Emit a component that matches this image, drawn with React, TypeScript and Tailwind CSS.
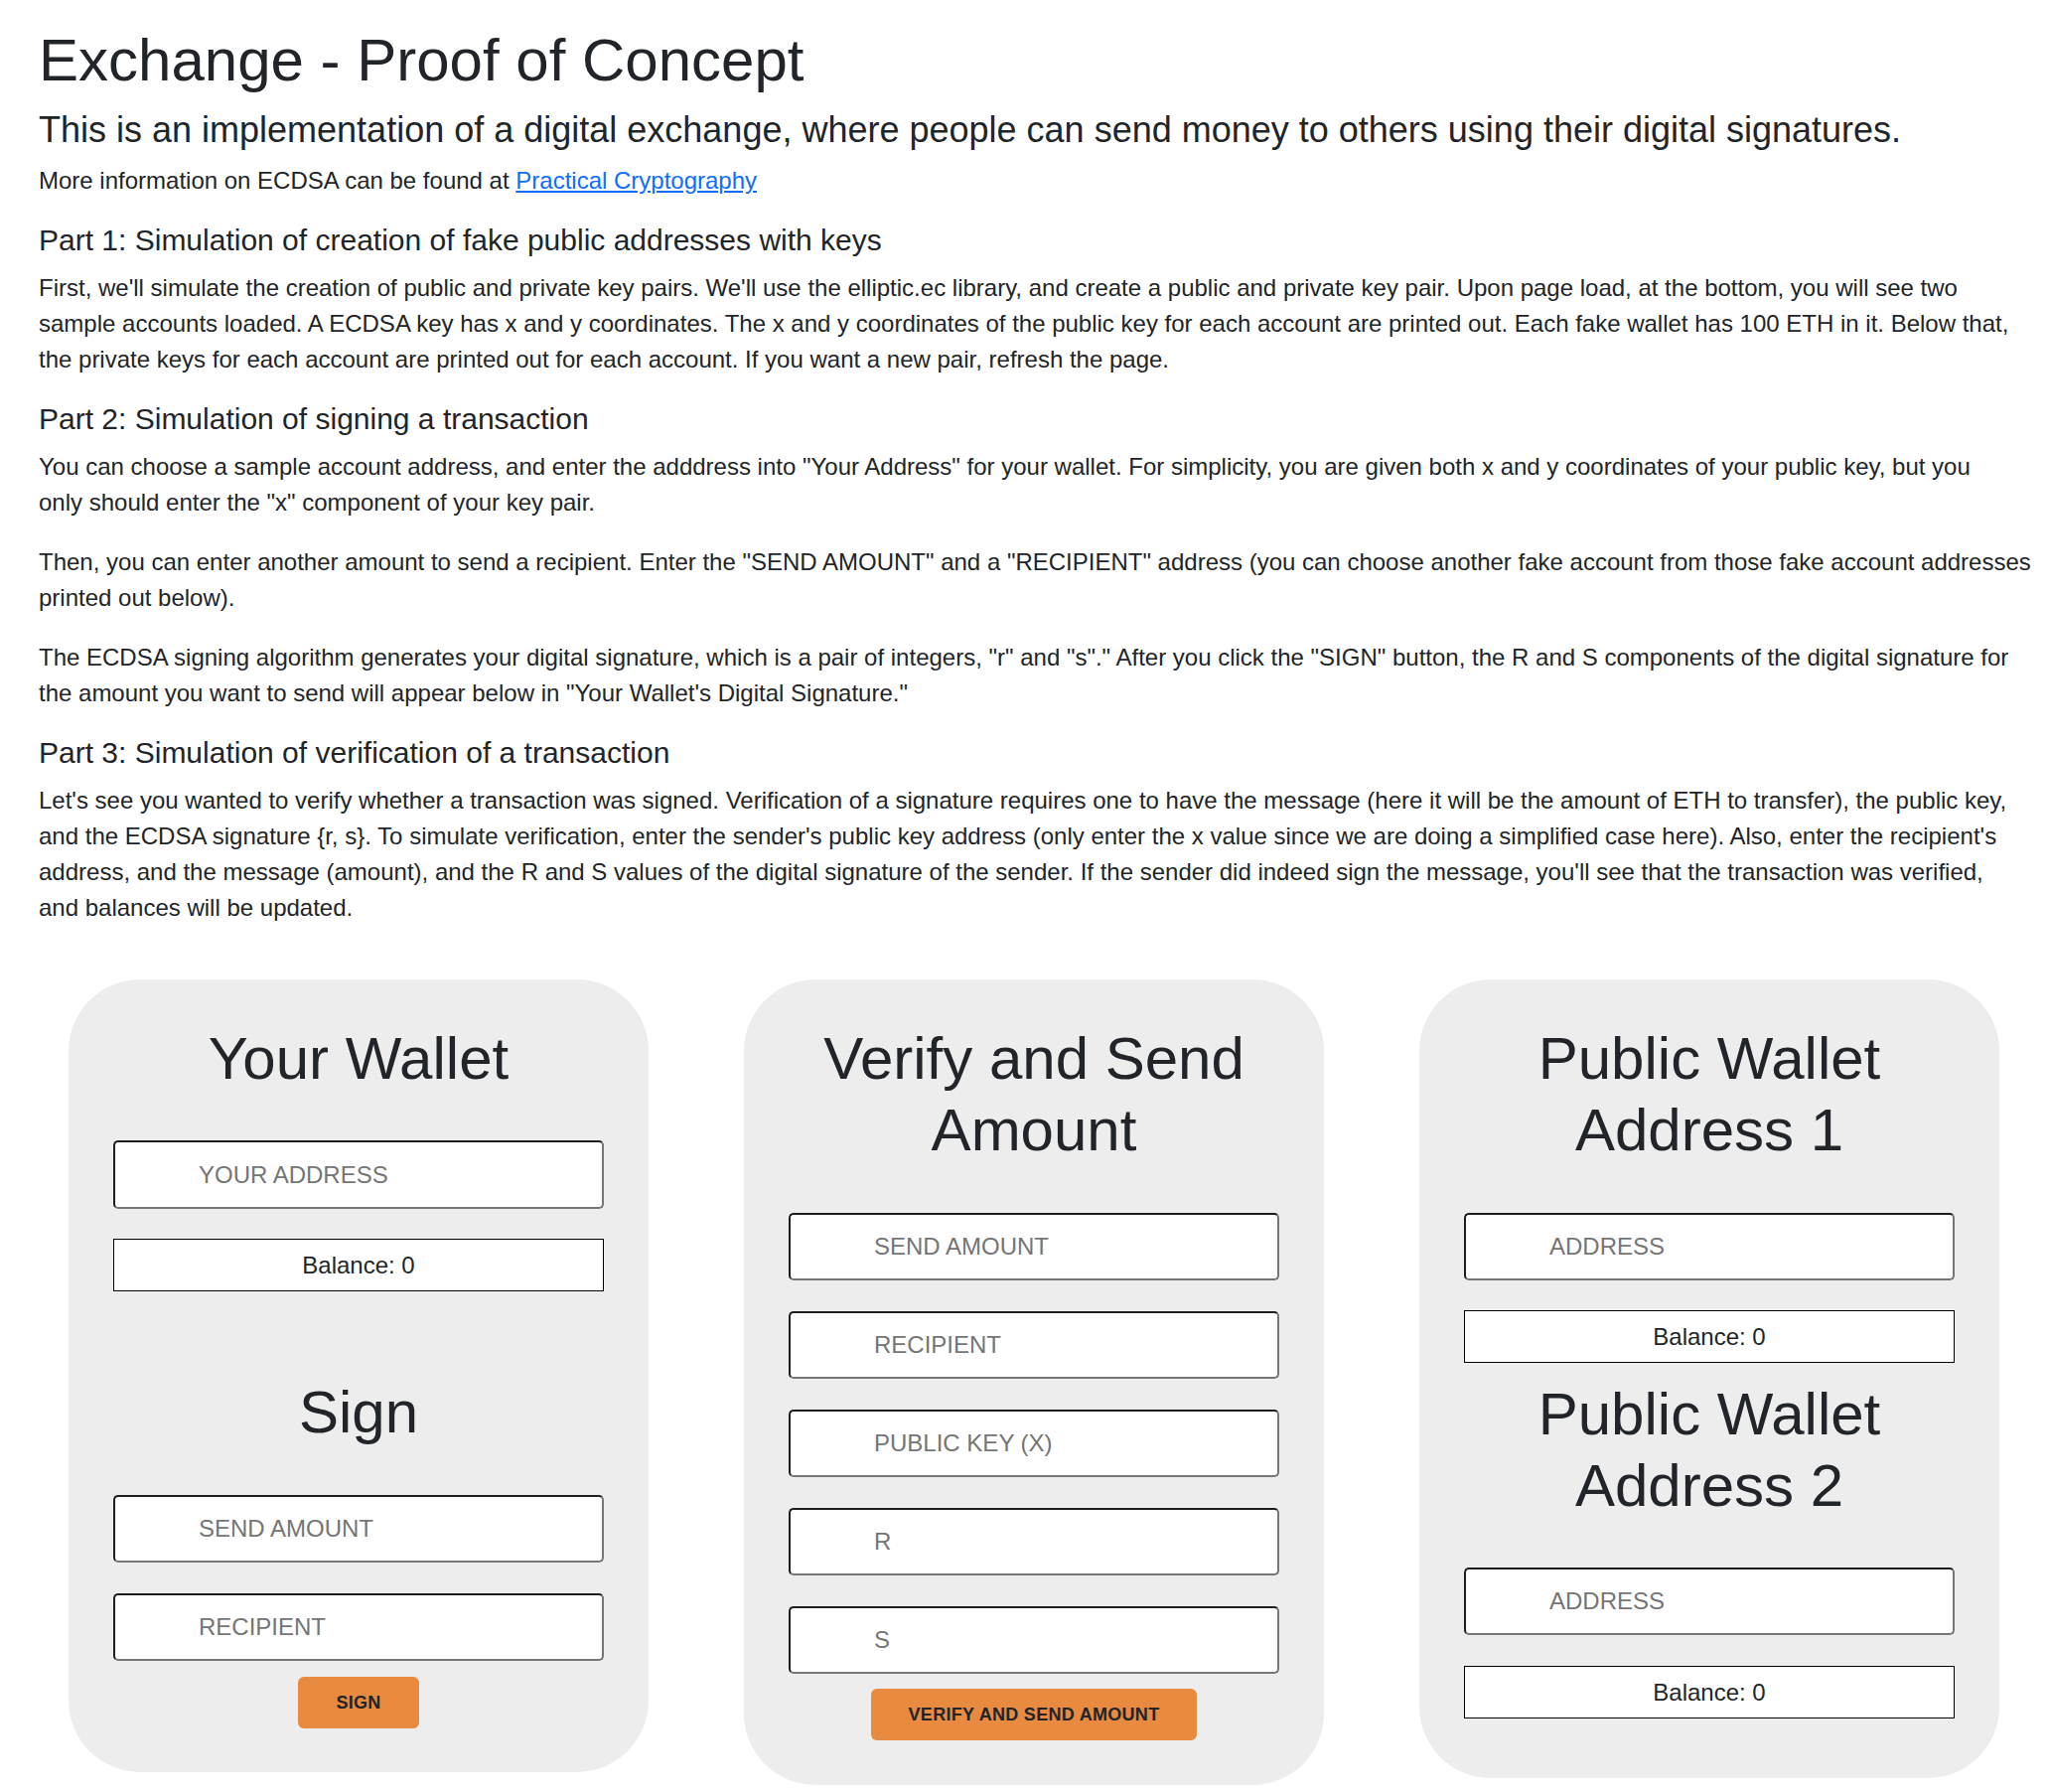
import React from 'react';

const inputClass =
  "block w-full h-[68px] bg-white border-2 border-t-[#1e1e1e] border-l-[#1e1e1e] border-r-[#767676] border-b-[#767676] rounded-[5px] pl-[84px] pr-3 text-[24px] text-[#212529] placeholder:text-[#757575] outline-none";

function Field({ placeholder, className = '' }: { placeholder: string; className?: string }) {
  return <input type="text" placeholder={placeholder} className={`${inputClass} ${className}`} />;
}

function Balance({ className = '' }: { className?: string }) {
  return (
    <div className={`h-[53px] bg-white border border-black flex items-center justify-center text-[24px] ${className}`}>
      Balance: 0
    </div>
  );
}

function OrangeButton({ children, className = '' }: { children: React.ReactNode; className?: string }) {
  return (
    <button
      type="button"
      className={`self-center h-[52px] px-[38px] rounded-[6px] bg-[#e88a40] text-[18px] font-bold tracking-[0.3px] text-[#212529] uppercase ${className}`}
    >
      {children}
    </button>
  );
}

function CardTitle({ children, className = '' }: { children: React.ReactNode; className?: string }) {
  return <h1 className={`text-center text-[60px] leading-[72px] font-normal ${className}`}>{children}</h1>;
}

export default function App() {
  return (
    <div className="min-h-screen bg-white text-[#212529] font-['Liberation_Sans',Arial,sans-serif]">
      <div className="pt-[25px] pl-[39px] pr-[12px]">
        <h1 className="text-[60px] leading-[1.2] mb-[12px]">Exchange - Proof of Concept</h1>
        <h4 className="text-[36px] leading-[1.2] mb-[12px]">
          This is an implementation of a digital exchange, where people can send money to others using their digital signatures.
        </h4>
        <p className="text-[24px] leading-[36px] mb-[24px]">
          More information on ECDSA can be found at{' '}
          <a href="#" className="text-[#0d6efd] underline">
            Practical Cryptography
          </a>
        </p>

        <h5 className="text-[30px] leading-[36px] mb-[12px]">Part 1: Simulation of creation of fake public addresses with keys</h5>
        <p className="text-[24px] leading-[36px] mb-[24px]">
          First, we'll simulate the creation of public and private key pairs. We'll use the elliptic.ec library, and create a
          public and private key pair. Upon page load, at the bottom, you will see two sample accounts loaded. A ECDSA key has x
          and y coordinates. The x and y coordinates of the public key for each account are printed out. Each fake wallet has 100
          ETH in it. Below that, the private keys for each account are printed out for each account. If you want a new pair,
          refresh the page.
        </p>

        <h5 className="text-[30px] leading-[36px] mb-[12px]">Part 2: Simulation of signing a transaction</h5>
        <p className="text-[24px] leading-[36px] mb-[24px]">
          You can choose a sample account address, and enter the adddress into "Your Address" for your wallet. For simplicity, you
          are given both x and y coordinates of your public key, but you
          <br />
          only should enter the "x" component of your key pair.
        </p>
        <p className="text-[24px] leading-[36px] mb-[24px]">
          Then, you can enter another amount to send a recipient. Enter the "SEND AMOUNT" and a "RECIPIENT" address (you can choose
          another fake account from those fake account addresses printed out below).
        </p>
        <p className="text-[24px] leading-[36px] mb-[24px]">
          The ECDSA signing algorithm generates your digital signature, which is a pair of integers, "r" and "s"." After you click
          the "SIGN" button, the R and S components of the digital signature for the amount you want to send will appear below in
          "Your Wallet's Digital Signature."
        </p>

        <h5 className="text-[30px] leading-[36px] mb-[12px]">Part 3: Simulation of verification of a transaction</h5>
        <p className="text-[24px] leading-[36px]">
          Let's see you wanted to verify whether a transaction was signed. Verification of a signature requires one to have the
          message (here it will be the amount of ETH to transfer), the public key, and the ECDSA signature {'{r, s}'}. To simulate
          verification, enter the sender's public key address (only enter the x value since we are doing a simplified case here).
          Also, enter the recipient's address, and the message (amount), and the R and S values of the digital signature of the
          sender. If the sender did indeed sign the message, you'll see that the transaction was verified,
          <br />
          and balances will be updated.
        </p>
      </div>

      <div className="flex items-start gap-[96px] pl-[69px] mt-[54px] pb-[8px]">
        {/* wallet + sign */}
        <div className="w-[584px] shrink-0 flex flex-col rounded-[72px] bg-[#ededed] px-[45px] pt-[44px] pb-[44px]">
          <CardTitle className="mb-[46px]">Your Wallet</CardTitle>
          <Field placeholder="YOUR ADDRESS" className="h-[69px]" />
          <Balance className="mt-[30px]" />
          <CardTitle className="mt-[86px] mb-[47px]">Sign</CardTitle>
          <Field placeholder="SEND AMOUNT" />
          <Field placeholder="RECIPIENT" className="mt-[31px]" />
          <OrangeButton className="mt-[16px]">Sign</OrangeButton>
        </div>

        {/* verify */}
        <div className="w-[584px] shrink-0 flex flex-col rounded-[72px] bg-[#ededed] px-[45px] pt-[44px] pb-[45px]">
          <CardTitle className="mb-[47px]">Verify and Send Amount</CardTitle>
          <Field placeholder="SEND AMOUNT" />
          <Field placeholder="RECIPIENT" className="mt-[31px]" />
          <Field placeholder="PUBLIC KEY (X)" className="mt-[31px]" />
          <Field placeholder="R" className="mt-[31px]" />
          <Field placeholder="S" className="mt-[31px]" />
          <OrangeButton className="mt-[15px]">Verify and Send Amount</OrangeButton>
        </div>

        {/* public wallets */}
        <div className="w-[584px] shrink-0 flex flex-col rounded-[72px] bg-[#ededed] px-[45px] pt-[44px] pb-[60px]">
          <CardTitle className="mb-[47px]">Public Wallet Address 1</CardTitle>
          <Field placeholder="ADDRESS" />
          <Balance className="mt-[30px]" />
          <CardTitle className="mt-[16px] mb-[46px]">Public Wallet Address 2</CardTitle>
          <Field placeholder="ADDRESS" />
          <Balance className="mt-[31px]" />
        </div>
      </div>
    </div>
  );
}
